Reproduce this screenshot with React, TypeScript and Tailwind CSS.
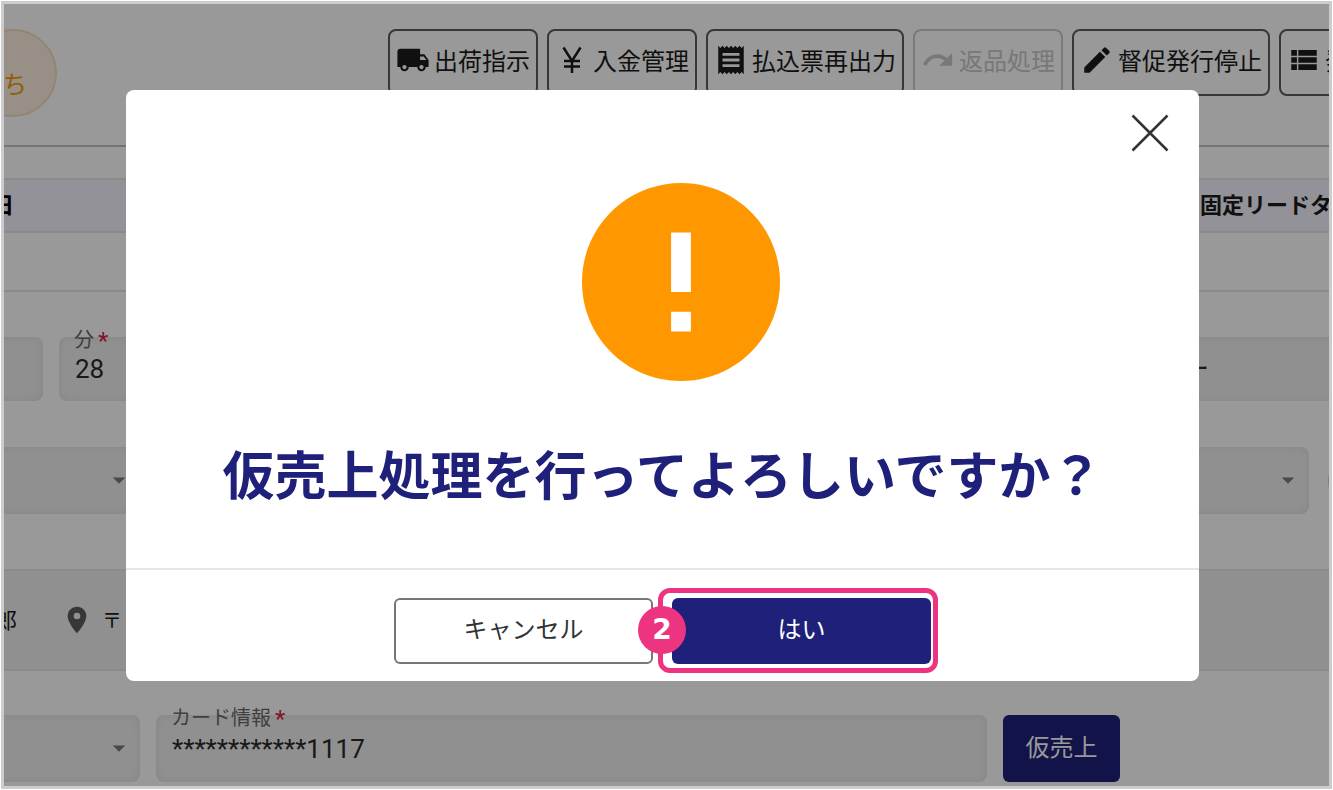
import type { ReactNode } from "react"
import clsx from "clsx"
import {
  MdArrowDropDown,
  MdEdit,
  MdLocalShipping,
  MdPlace,
  MdReceipt,
  MdRedo,
  MdViewList,
} from "react-icons/md"

function YenIcon() {
  return (
    <svg viewBox="0 0 34 34" className="size-[34px]" fill="none" stroke="currentColor" strokeWidth="2.5">
      <path d="M8.5 4.5 17 18 25.5 4.5M17 17.5V30M9 18h16M9 23.5h16" />
    </svg>
  )
}

const actions = [
  { label: "出荷指示", icon: <MdLocalShipping className="size-[34px]" /> },
  { label: "入金管理", icon: <YenIcon /> },
  { label: "払込票再出力", icon: <MdReceipt className="size-[34px]" /> },
  { label: "返品処理", icon: <MdRedo className="size-[34px]" />, disabled: true },
  { label: "督促発行停止", icon: <MdEdit className="size-[34px]" /> },
  { label: "発行", icon: <MdViewList className="size-[34px]" /> },
]

const fieldBox = "w-full rounded-lg bg-[#f0f0f0] shadow-[inset_0_0_8px_rgba(0,0,0,0.08)]"

function TextField({
  id,
  label,
  value,
  className,
  inputClass,
}: {
  id: string
  label?: string
  value?: string
  className?: string
  inputClass?: string
}) {
  return (
    <div className={clsx("relative", className)}>
      {label && (
        <label htmlFor={id} className="absolute -top-2 left-[15px] flex gap-1 text-xl leading-5 text-[#6a6a6a]">
          {label}
          <span className="font-['Roboto',sans-serif] text-2xl leading-6 text-[#e01b48]">*</span>
        </label>
      )}
      <input
        id={id}
        aria-label={label ?? id}
        defaultValue={value}
        className={clsx(
          fieldBox,
          "px-4 font-['Roboto','Noto_Sans_CJK_JP',sans-serif] text-[26px] text-[#2a2a2a]",
          inputClass
        )}
      />
    </div>
  )
}

function SelectField({ name, className }: { name: string; className?: string }) {
  return (
    <div className={clsx("relative", className)}>
      <select aria-label={name} className={clsx(fieldBox, "h-[67px] appearance-none px-4")}>
        <option></option>
      </select>
      <MdArrowDropDown className="pointer-events-none absolute top-[18px] right-1.5 size-[30px] text-[#7a7a7a]" />
    </div>
  )
}

function Header() {
  return (
    <header className="flex items-start border-b-2 border-[#c4c4c4] pt-[25px] pb-7">
      <div className="-ml-[35px] flex size-[88px] shrink-0 items-end justify-end rounded-full border-2 border-[#f5dcc0] bg-[#fdf0e0] pr-7 pb-4 text-2xl text-[#f59a00]">
        ち
      </div>
      <nav className="ml-[331px] flex shrink-0 gap-[9px]">
        {actions.map((a) => (
          <button
            key={a.label}
            disabled={a.disabled}
            className={clsx(
              "flex h-[67px] shrink-0 items-center gap-1 rounded-lg border-2 px-1.5 pb-1.5 text-2xl whitespace-nowrap",
              a.disabled ? "border-[#cacaca] text-[#c8c8c8]" : "border-[#5c5c5c] text-[#1c1c1c]"
            )}
          >
            {a.icon}
            {a.label}
          </button>
        ))}
      </nav>
    </header>
  )
}

function OrderPage() {
  return (
    <div>
      <Header />

      <table className="mt-[31px] w-full table-fixed border-collapse text-[22px]">
        <thead>
          <tr className="h-[53px] border-y-2 border-[#e6e6e6] bg-[#f5f3fd]">
            <th className="w-[10px] p-0 pb-1">
              <div className="flex justify-end">日</div>
            </th>
            <th></th>
            <th className="w-[129px] p-0 pb-1 text-left whitespace-nowrap text-[#1c1c1c]">固定リードタイム</th>
          </tr>
        </thead>
        <tbody>
          <tr className="h-[59px] border-b-2 border-[#e6e6e6]">
            <td></td>
            <td></td>
            <td></td>
          </tr>
        </tbody>
      </table>

      <div className="mt-[45px] flex gap-4">
        <TextField id="hour" className="-ml-[61px] w-[100px] shrink-0" inputClass="h-16" />
        <TextField id="minute" label="分" value="28" className="w-[140px] shrink-0" inputClass="h-16" />
        <TextField id="calendar" value="ー" className="-mr-4 flex-1" inputClass="h-16 pb-1.5 pl-[968px]" />
      </div>

      <div className="mt-[46px] flex gap-4">
        <SelectField name="配送方法" className="-ml-16 w-[200px] shrink-0" />
        <SelectField name="配送業者" className="mr-[3px] flex-1" />
        <button aria-label="追加" className="-mr-[47px] size-12 shrink-0 self-center rounded-full border-2 border-[#f5c9a0]" />
      </div>

      <div className="mt-[55px] flex h-[102px] items-center border-y-2 border-[#e6e6e6] bg-[#f0f0f0] text-[22px] text-[#1c1c1c]">
        <span className="flex w-[13px] justify-end pb-1">郎</span>
        <MdPlace className="ml-11 size-8 text-[#5c5c5c]" />
        <span className="ml-[9px] text-xl">〒</span>
      </div>

      <div className="mt-11 flex gap-4 pr-[209px] pb-1">
        <SelectField name="支払方法" className="-ml-16 w-[200px] shrink-0" />
        <TextField id="card" label="カード情報" value="************1117" className="flex-1" inputClass="h-[67px]" />
        <button className="h-[67px] w-[117px] shrink-0 rounded-md bg-[#1e2079] pb-1.5 text-2xl text-white">
          仮売上
        </button>
      </div>
    </div>
  )
}

function DialogButton({ primary, children }: { primary?: boolean; children: ReactNode }) {
  return (
    <button
      className={clsx(
        "h-[66px] w-[259px] rounded-md pb-1.5 text-2xl",
        primary ? "bg-[#1e2079] text-white" : "border-2 border-[#777] bg-white text-[#333]"
      )}
    >
      {children}
    </button>
  )
}

function ConfirmDialog() {
  return (
    <div
      role="dialog"
      aria-modal="true"
      aria-labelledby="confirm-title"
      className="relative w-full max-w-[1073px] overflow-hidden rounded-lg bg-white"
    >
      <button aria-label="閉じる" className="absolute top-6 right-[30px]">
        <svg viewBox="0 0 38 38" className="size-[38px] text-[#333]" stroke="currentColor" strokeWidth="2.5">
          <path d="M1.5 1.5 36.5 36.5M36.5 1.5 1.5 36.5" />
        </svg>
      </button>

      <div className="flex flex-col items-center border-b-2 border-[#e6e6e6] pt-[93px] pb-[65px]">
        <svg viewBox="2 2 20 20" className="ml-9 size-[198px] text-[#ff9800]" fill="currentColor">
          <path d="M12 2C6.48 2 2 6.48 2 12s4.48 10 10 10 10-4.48 10-10S17.52 2 12 2zm1 15h-2v-2h2v2zm0-4h-2V7h2v6z" />
        </svg>
        <h1 id="confirm-title" className="mt-[62px] text-[52px] leading-[60px] font-bold text-[#1e2079]">
          仮売上処理を行ってよろしいですか？
        </h1>
      </div>

      <div className="flex justify-center gap-[19px] pt-7 pb-[17px]">
        <DialogButton>キャンセル</DialogButton>
        <div className="relative">
          <DialogButton primary>はい</DialogButton>
          {/* step marker */}
          <div className="pointer-events-none absolute -top-2.5 -right-[7px] -bottom-[9px] -left-3.5 rounded-xl border-[5px] border-[#ec3480]" />
          <span className="absolute top-2 -left-[34px] flex size-12 items-center justify-center rounded-full bg-[#ec3480] font-['DejaVu_Sans',sans-serif] text-[28px] font-bold text-white">
            2
          </span>
        </div>
      </div>
    </div>
  )
}

export default function App() {
  return (
    <div className="min-h-screen bg-white p-px font-['Noto_Sans_CJK_JP',sans-serif]">
      <div className="relative min-h-[calc(100vh-2px)] overflow-hidden border-[3px] border-[#ccc] bg-white">
        <OrderPage />
        <div className="absolute inset-0 flex items-start justify-center bg-black/40 pt-[86px] pr-2">
          <ConfirmDialog />
        </div>
      </div>
    </div>
  )
}
